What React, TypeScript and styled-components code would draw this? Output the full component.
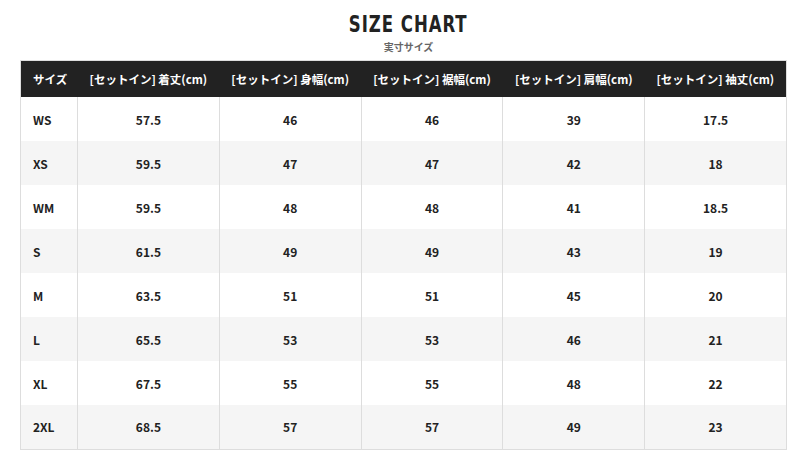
import React from 'react';
import styled, {createGlobalStyle} from 'styled-components';

const headers = [
    'サイズ',
    '[セットイン] 着丈(cm)',
    '[セットイン] 身幅(cm)',
    '[セットイン] 裾幅(cm)',
    '[セットイン] 肩幅(cm)',
    '[セットイン] 袖丈(cm)',
];

const rows: string[][] = [
    ['WS', '57.5', '46', '46', '39', '17.5'],
    ['XS', '59.5', '47', '47', '42', '18'],
    ['WM', '59.5', '48', '48', '41', '18.5'],
    ['S', '61.5', '49', '49', '43', '19'],
    ['M', '63.5', '51', '51', '45', '20'],
    ['L', '65.5', '53', '53', '46', '21'],
    ['XL', '67.5', '55', '55', '48', '22'],
    ['2XL', '68.5', '57', '57', '49', '23'],
];

const App: React.FC = () => {
    return (
        <Page>
            <GlobalStyle/>
            <Heading>
                <h1>SIZE CHART</h1>
                <p>実寸サイズ</p>
            </Heading>
            <Table>
                <colgroup>
                    <col style={{width: 57}}/>
                    <col/><col/><col/><col/><col/>
                </colgroup>
                <thead>
                <tr>
                    {headers.map((h, i) => <Th key={h} first={i === 0}>{h}</Th>)}
                </tr>
                </thead>
                <tbody>
                {rows.map((r) => (
                    <Row key={r[0]}>
                        {r.map((c, i) => <Td key={i} first={i === 0}>{c}</Td>)}
                    </Row>
                ))}
                </tbody>
            </Table>
        </Page>
    )
};

export default App

const GlobalStyle = createGlobalStyle`
  body {
    margin: 0;
    background: #fff;
    font-family: "Noto Sans CJK JP", "Noto Sans", sans-serif;
    color: #222;
  }
`;

const Page = styled.div`
  padding: 10px 16px 0 20px;
`;

const Heading = styled.div`
  width: 767px;
  padding-left: 10px;
  box-sizing: border-box;
  text-align: center;
  margin-bottom: 5px;

  h1 {
    display: inline-block;
    margin: 0;
    font-family: "DejaVu Sans", sans-serif;
    font-stretch: condensed;
    font-size: 23px;
    font-weight: 700;
    letter-spacing: 1.2px;
    line-height: 28px;
    color: #222;
    transform: scaleX(0.8);
  }

  p {
    margin: 1px 0 0;
    font-size: 10px;
    font-weight: 700;
    line-height: 16px;
    color: #666;
  }
`;

const Table = styled.table`
  width: 767px;
  border-collapse: collapse;
  table-layout: fixed;
  border: 1px solid #ddd;
`;

const Th = styled.th<{first?: boolean}>`
  background: #222;
  color: #fff;
  height: 36px;
  padding: 0 0 0 ${p => p.first ? '12px' : '0'};
  font-size: 11.5px;
  font-weight: 700;
  text-align: ${p => p.first ? 'left' : 'center'};
  white-space: nowrap;
`;

const Row = styled.tr`
  height: 44px;
  &:nth-child(even) {
    background: #f5f5f5;
  }
`;

const Td = styled.td<{first?: boolean}>`
  border-right: 1px solid #ddd;
  padding: 0 0 0 ${p => p.first ? '12px' : '0'};
  font-size: 12px;
  font-weight: 700;
  text-align: ${p => p.first ? 'left' : 'center'};
  color: #222;
`;
